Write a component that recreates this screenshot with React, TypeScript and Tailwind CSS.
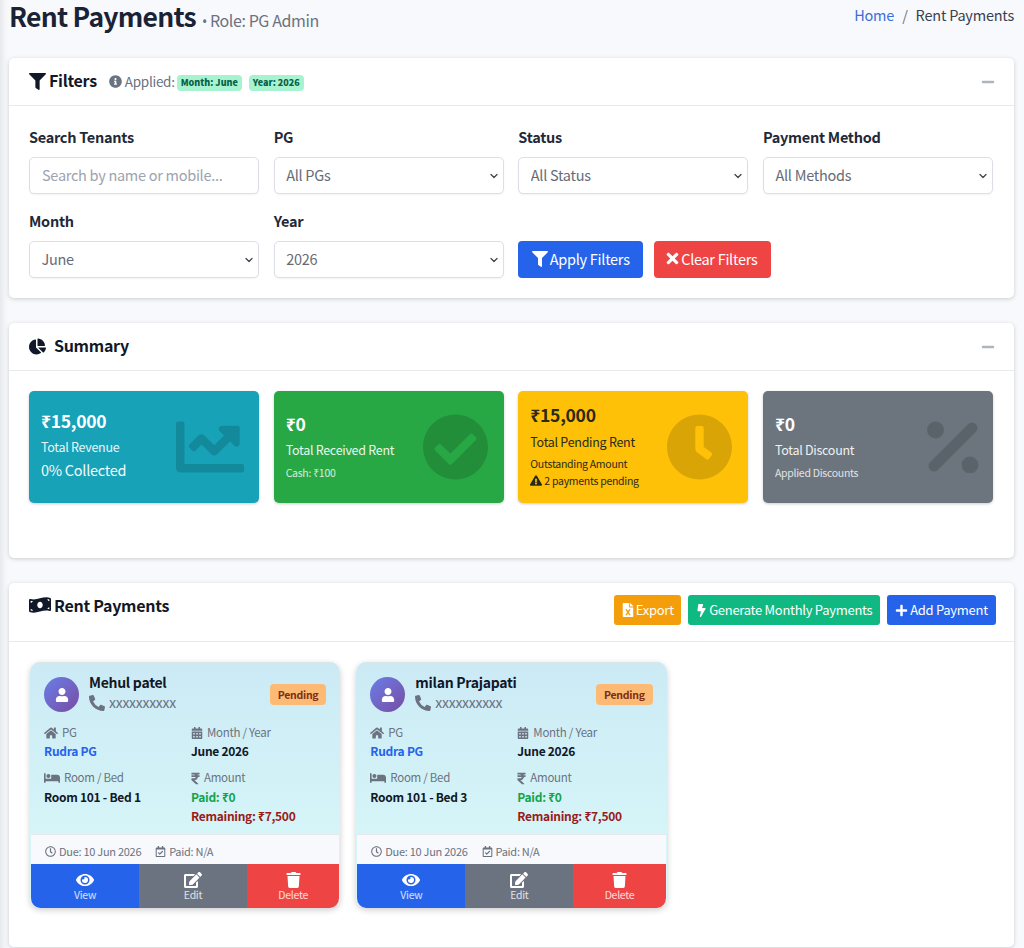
import {
  FaBed,
  FaBolt,
  FaCalendarAlt,
  FaChartLine,
  FaChartPie,
  FaCheckCircle,
  FaClock,
  FaEdit,
  FaExclamationTriangle,
  FaEye,
  FaFileExcel,
  FaFilter,
  FaHome,
  FaInfoCircle,
  FaMinus,
  FaMoneyBillWave,
  FaPhoneAlt,
  FaPlus,
  FaRegCalendarCheck,
  FaRegClock,
  FaRupeeSign,
  FaTimes,
  FaTrash,
  FaUser
} from "react-icons/fa";
import { ChevronDown } from "lucide-react";

const font = "font-['Noto_Sans_CJK_SC','Noto_Sans',sans-serif]";

const fieldClass =
  "h-[37px] w-full rounded-[5px] border border-[#dcdfe5] bg-white pb-[2px] text-[14.5px] text-[#656c76] shadow-[0_1px_2px_rgba(0,0,0,0.05)] outline-none";

const labelClass = "mb-[9px] block h-[22px] text-[14.5px] leading-[22px] font-bold text-[#1f2937]";

const SelectField = ({ label, value }: { label: string; value: string }) => (
  <div>
    <label className={labelClass}>{label}</label>
    <div className="relative">
      <select defaultValue={value} className={`${fieldClass} appearance-none pr-[20px] pl-[11.5px]`}>
        <option>{value}</option>
      </select>
      <ChevronDown
        strokeWidth={2.6}
        className="pointer-events-none absolute top-[12.5px] right-[4px] h-[12px] w-[12px] text-[#3f4650]"
      />
    </div>
  </div>
);

const Collapse = () => <FaMinus className="h-[14px] w-[14px] text-[#adb5bd]" />;

const Filters = () => (
  <section className="rounded-[5px] bg-white shadow-[0_1px_4px_rgba(0,0,0,0.18)]">
    <div className="flex h-[48px] items-center justify-between border-b border-[#e8eaee] pr-[19px] pl-[20px]">
      <div className="flex items-center">
        <FaFilter className="h-[17px] w-[17px] text-[#111827]" />
        <span className="-mt-[3px] ml-[3px] text-[16px] font-bold text-[#111827]">Filters</span>
        <FaInfoCircle className="ml-[12px] h-[13px] w-[13px] text-[#6b7280]" />
        <span className="ml-[3px] text-[13.5px] text-[#6b7280]">Applied:</span>
        <span className="mt-[2px] ml-[2px] rounded-[4px] bg-[#a7f3d0] px-[4px] text-[9px] leading-[16px] font-black tracking-[0px] text-[#065f46]">
          Month: June
        </span>
        <span className="mt-[2px] ml-[7px] rounded-[4px] bg-[#a7f3d0] px-[4px] text-[9px] leading-[16px] font-black tracking-[0px] text-[#065f46]">
          Year: 2026
        </span>
      </div>
      <Collapse />
    </div>
    <div className="pt-[20px] pr-[21px] pb-[20px] pl-[20px]">
      <div className="grid grid-cols-4 gap-x-[14.67px] gap-y-[16px]">
        <div>
          <label className={labelClass}>Search Tenants</label>
          <input className={`${fieldClass} px-3 placeholder:text-[#9ca3af]`} placeholder="Search by name or mobile..." />
        </div>
        <SelectField label="PG" value="All PGs" />
        <SelectField label="Status" value="All Status" />
        <SelectField label="Payment Method" value="All Methods" />
        <SelectField label="Month" value="June" />
        <SelectField label="Year" value="2026" />
        <div className="col-span-2 flex items-end gap-[11px]">
          <button className="flex h-[37px] items-center gap-[2px] rounded-[4px] bg-[#2563eb] px-[13.5px] pb-[2px] text-[14.5px] text-white">
            <FaFilter className="h-[16px] w-[16px]" />
            Apply Filters
          </button>
          <button className="flex h-[37px] items-center gap-[1px] rounded-[4px] bg-[#ef4444] pr-[14px] pb-[2px] pl-[11px] text-[14.5px] text-white">
            <FaTimes className="h-[17px] w-[15px]" />
            Clear Filters
          </button>
        </div>
      </div>
    </div>
  </section>
);

interface StatProps {
  amount: string;
  title: string;
  color: string;
  dark?: boolean;
  icon: React.ReactNode;
  children: React.ReactNode;
}

const Stat = ({ amount, title, color, dark, icon, children }: StatProps) => (
  <div
    className={`relative flex h-[112px] flex-col justify-center rounded-[5px] px-[12px] pb-[4px] shadow-[0_1px_3px_rgba(0,0,0,0.2)] ${color} ${
      dark ? "text-[#2a2a1c]" : "text-white"
    }`}
  >
    <div className="text-[17.5px] leading-[26px] font-bold">{amount}</div>
    <div className={`text-[12.5px] leading-[20px] ${dark ? "mt-[4px]" : "mt-[3px] opacity-90"}`}>{title}</div>
    {children}
    <div className="absolute top-1/2 right-[15px] -translate-y-1/2 text-black/15">{icon}</div>
  </div>
);

const PercentIcon = () => (
  <svg viewBox="0 0 52 52" className="-mr-[1px] h-[52px] w-[52px]" fill="currentColor">
    <circle cx="8.5" cy="9" r="8.5" />
    <circle cx="43" cy="44" r="8.5" />
    <path d="M45 7L7 45" stroke="currentColor" strokeWidth="11" strokeLinecap="round" />
  </svg>
);

const Summary = () => (
  <section className="mt-[25px] rounded-[5px] bg-white shadow-[0_1px_4px_rgba(0,0,0,0.18)]">
    <div className="flex h-[48px] items-center justify-between border-b border-[#e8eaee] pr-[19px] pl-[20px]">
      <div className="flex items-center">
        <FaChartPie className="h-[17px] w-[17px] text-[#111827]" />
        <span className="-mt-[3px] ml-[8px] text-[16px] font-bold text-[#111827]">Summary</span>
      </div>
      <Collapse />
    </div>
    <div className="grid h-[187px] grid-cols-4 items-start gap-x-[14.67px] pt-[20px] pr-[21px] pl-[20px]">
      <Stat amount="₹15,000" title="Total Revenue" color="bg-[#17a2b8]" icon={<FaChartLine className="h-[68px] w-[68px]" />}>
        <div className="mt-[2px] mb-[2px] text-[14.5px] leading-[22px] opacity-95">0% Collected</div>
      </Stat>
      <Stat amount="₹0" title="Total Received Rent" color="bg-[#28a745]" icon={<FaCheckCircle className="h-[67px] w-[67px]" />}>
        <div className="mt-[6px] text-[10.5px] leading-[14px] opacity-80">Cash: ₹100</div>
      </Stat>
      <Stat amount="₹15,000" title="Total Pending Rent" color="bg-[#ffc107]" dark icon={<FaClock className="h-[67px] w-[67px]" />}>
        <div className="mt-[3px] text-[10.5px] leading-[17px]">Outstanding Amount</div>
        <div className="flex items-center gap-[2px] text-[10.5px] leading-[17px]">
          <FaExclamationTriangle className="h-[11px] w-[12px]" />2 payments pending
        </div>
      </Stat>
      <Stat amount="₹0" title="Total Discount" color="bg-[#6c757d]" icon={<PercentIcon />}>
        <div className="mt-[6px] text-[10.5px] leading-[14px] opacity-80">Applied Discounts</div>
      </Stat>
    </div>
  </section>
);

const InfoLabel = ({ icon, text }: { icon: React.ReactNode; text: string }) => (
  <div className="flex h-[18px] items-center gap-[4px] text-[11.5px] text-[#6b7280]">
    {icon}
    {text}
  </div>
);

const ActionButton = ({ icon, text, color }: { icon: React.ReactNode; text: string; color: string }) => (
  <button className={`flex h-[44px] flex-col items-center justify-center text-white ${color}`}>
    {icon}
    <span className="mt-[1px] text-[10.5px] leading-[12px] text-white/80">{text}</span>
  </button>
);

const PaymentCard = ({ name, bed }: { name: string; bed: string }) => (
  <div className="overflow-hidden rounded-[10px] border-x-[1.5px] border-transparent bg-gradient-to-b from-[#cbeaf5] to-[#d6f5f8] to-70% shadow-[0_2px_6px_rgba(0,0,0,0.2)]">
    <div className="h-[4px] bg-gradient-to-b from-[#d9e6e8] to-[#cbeaf5]" />
    <div className="flex h-[55px] items-center justify-between pt-[2px] pr-[13px] pl-[13px]">
      <div className="flex items-center">
        <div className="flex h-[35px] w-[35px] items-center justify-center rounded-full bg-gradient-to-br from-[#667eea] to-[#764ba2] text-white">
          <FaUser className="h-[14px] w-[14px]" />
        </div>
        <div className="ml-[10px] pb-[6px]">
          <div className="text-[14px] leading-[22px] font-bold text-[#111827]">{name}</div>
          <div className="flex h-[19px] items-center gap-[4px] text-[14px] leading-[19px] text-[#6b7280]">
            <FaPhoneAlt className="h-[16px] w-[16px]" />
            xxxxxxxxxx
          </div>
        </div>
      </div>
      <span className="rounded-[4px] bg-[#fdba74] px-[8px] text-[10.5px] leading-[21px] font-bold text-[#7c2d12]">
        Pending
      </span>
    </div>
    <div className="grid h-[113px] grid-cols-[147px_1fr] px-[13px] pt-[3px]">
      <div>
        <InfoLabel icon={<FaHome className="h-[14px] w-[14px]" />} text="PG" />
        <div className="text-[12px] leading-[18px] font-bold text-[#2563eb]">Rudra PG</div>
        <div className="mt-[9px]">
          <InfoLabel icon={<FaBed className="h-[16px] w-[16px]" />} text="Room / Bed" />
        </div>
        <div className="text-[12px] leading-[19px] font-bold text-[#111827]">{bed}</div>
      </div>
      <div>
        <InfoLabel icon={<FaCalendarAlt className="h-[12px] w-[12px]" />} text="Month / Year" />
        <div className="text-[12px] leading-[18px] font-bold text-[#111827]">June 2026</div>
        <div className="mt-[9px]">
          <InfoLabel icon={<FaRupeeSign className="h-[13px] w-[9px]" />} text="Amount" />
        </div>
        <div className="text-[12px] leading-[19px] font-bold text-[#16a34a]">Paid: ₹0</div>
        <div className="text-[12px] leading-[19px] font-bold text-[#991b1b]">Remaining: ₹7,500</div>
      </div>
    </div>
    <div className="flex h-[30px] items-center gap-[14px] border-t border-[#e5e7eb] bg-[#f8f9fc] pt-[3px] pl-[14px] text-[11px] text-[#6b7280]">
      <span className="flex items-center gap-[3px]">
        <FaRegClock className="h-[11px] w-[11px]" />
        Due: 10 Jun 2026
      </span>
      <span className="flex items-center gap-[3px]">
        <FaRegCalendarCheck className="h-[11px] w-[11px]" />
        Paid: N/A
      </span>
    </div>
    <div className="grid grid-cols-[108px_108px_1fr]">
      <ActionButton icon={<FaEye className="h-[16px] w-[18px]" />} text="View" color="bg-[#2563eb]" />
      <ActionButton icon={<FaEdit className="h-[16px] w-[18px]" />} text="Edit" color="bg-[#6b7280]" />
      <ActionButton icon={<FaTrash className="h-[16px] w-[15px]" />} text="Delete" color="bg-[#ef4444]" />
    </div>
  </div>
);

const HeaderButton = ({ icon, text, color }: { icon: React.ReactNode; text: string; color: string }) => (
  <button className={`flex h-[30px] items-center gap-[2px] rounded-[3px] text-[13px] text-white ${color}`}>
    {icon}
    {text}
  </button>
);

const Payments = () => (
  <section className="mt-[25px] h-[364px] rounded-[5px] bg-white shadow-[0_1px_4px_rgba(0,0,0,0.18)]">
    <div className="flex h-[59px] items-start justify-between border-b border-[#e8eaee] pr-[18px] pl-[20px]">
      <div className="flex items-center pt-[10px]">
        <FaMoneyBillWave className="h-[20px] w-[22px] text-[#111827]" />
        <span className="ml-[3px] text-[16px] leading-[24px] font-bold text-[#111827]">Rent Payments</span>
      </div>
      <div className="flex gap-[7px] pt-[12px]">
        <HeaderButton icon={<FaFileExcel className="h-[14px] w-[12px]" />} text="Export" color="bg-[#f59e0b] px-[7.7px]" />
        <HeaderButton icon={<FaBolt className="h-[13px] w-[11px]" />} text="Generate Monthly Payments" color="bg-[#10b981] px-[7.7px]" />
        <HeaderButton icon={<FaPlus className="h-[13px] w-[13px]" />} text="Add Payment" color="bg-[#2563eb] px-[8.2px]" />
      </div>
    </div>
    <div className="grid grid-cols-3 gap-x-[16px] px-[21px] pt-[20px]">
      <PaymentCard name="Mehul patel" bed="Room 101 - Bed 1" />
      <PaymentCard name="milan Prajapati" bed="Room 101 - Bed 3" />
    </div>
  </section>
);

export default function App() {
  return (
    <div
      className={`${font} min-h-[948px] bg-[#f8f9fc] pr-[10px] pl-[9px] tracking-[-0.28px] shadow-[inset_9px_0_6px_-6px_rgba(0,0,0,0.08)]`}
    >
      <header className="flex h-[58px] items-start justify-between">
        <div className="flex items-baseline">
          <h1 className="text-[26.5px] leading-[32px] font-bold tracking-[-0.75px] text-[#1a2236]">Rent Payments</h1>
          <span className="ml-[6px] font-['Noto_Sans'] text-[14px] text-[#6b7280]">•</span>
          <span className="ml-[3px] text-[16px] tracking-[-0.4px] text-[#6b7280]">Role: PG Admin</span>
        </div>
        <nav className="flex pt-[4px] text-[14.5px] leading-[22px] tracking-[-0.22px]">
          <a className="text-[#3b6fd8]">Home</a>
          <span className="mx-[8px] text-[#6b7280]">/</span>
          <span className="text-[#374151]">Rent Payments</span>
        </nav>
      </header>
      <Filters />
      <Summary />
      <Payments />
    </div>
  );
}
